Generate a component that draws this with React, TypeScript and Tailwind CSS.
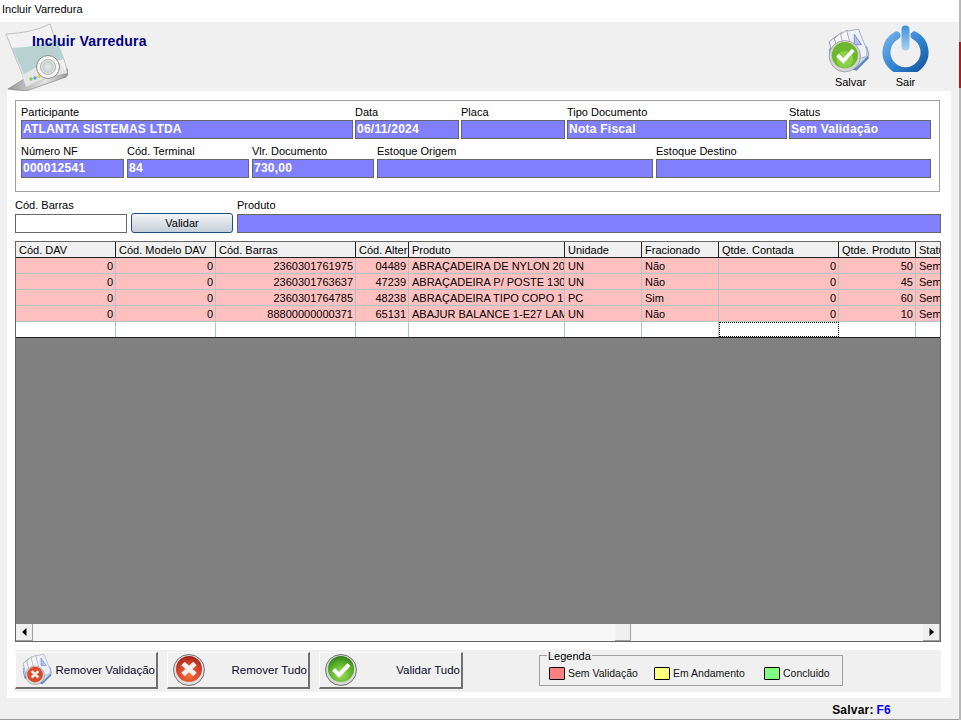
const FONT = "[font-family:'Liberation_Sans',Arial,sans-serif]";

function Field({ label, value, w }: { label: string; value?: string; w: string }) {
  return (
    <div className={`flex flex-col ${w}`}>
      <div className="h-[15px] text-[11px] leading-[15px] text-black">{label}</div>
      <div className="h-[19px] border border-[#666] bg-[#8080ff] pl-[1px] text-[12px] font-bold leading-[16px] tracking-[0.25px] text-white">
        {value}
      </div>
    </div>
  );
}

function CheckCircle({ size, cls }: { size: number; cls?: string }) {
  return (
    <svg width={size} height={size} viewBox="0 0 32 32" className={cls}>
      <defs>
        <radialGradient id="gc" cx="50%" cy="70%" r="70%">
          <stop offset="0%" stopColor="#a6e05a" />
          <stop offset="60%" stopColor="#5cb32a" />
          <stop offset="100%" stopColor="#2f7f1a" />
        </radialGradient>
      </defs>
      <circle cx="16" cy="16" r="15.5" fill="#d8d8d8" stroke="#555" strokeWidth="0.8" />
      <circle cx="16" cy="15" r="13" fill="url(#gc)" />
      <path d="M8.5 15.5 L14 21 L24 10.5" fill="none" stroke="#fff" strokeWidth="4" />
    </svg>
  );
}

function XCircle({ size, cls }: { size: number; cls?: string }) {
  return (
    <svg width={size} height={size} viewBox="0 0 32 32" className={cls}>
      <defs>
        <radialGradient id="rc" cx="50%" cy="75%" r="75%">
          <stop offset="0%" stopColor="#f2703a" />
          <stop offset="60%" stopColor="#d8432a" />
          <stop offset="100%" stopColor="#a02318" />
        </radialGradient>
      </defs>
      <circle cx="16" cy="16" r="15.5" fill="#e0e0e0" stroke="#555" strokeWidth="0.8" />
      <circle cx="16" cy="15" r="13" fill="url(#rc)" />
      <path d="M10 9.5 L22 20.5 M22 9.5 L10 20.5" fill="none" stroke="#f4f0ec" strokeWidth="5" />
    </svg>
  );
}

function Papers({ kind, w, h, cls }: { kind: "ok" | "x"; w: number; h: number; cls?: string }) {
  return (
    <svg width={w} height={h} viewBox="0 0 44 42" className={cls}>
      <path d="M4 22 L6 32 L30 40 L42 28 L40 20 Z" fill="#5d86c4" />
      <path d="M4 19 L6 29 L30 37 L42 25 L40 17 Z" fill="#cfdcf0" stroke="#6f8fc2" strokeWidth="0.8" />
      <path d="M4 12 L12 6 L18 26 L8 28 Z" fill="#eef1f6" stroke="#8a8f98" strokeWidth="0.8" />
      <path d="M9 9 L16 3 L24 24 L14 28 Z" fill="#f5f6f9" stroke="#8a8f98" strokeWidth="0.8" />
      <path d="M15 5 L21 1 L28 22 L20 26 Z" fill="#f5f6f9" stroke="#9a9fa8" strokeWidth="0.8" />
      <path d="M21 2 L32 0 L40 20 L40 26 L28 30 Z" fill="#eef1fa" stroke="#9aa4bd" strokeWidth="0.8" />
      <path d="M28 5 L35 15 L28 15 Z" fill="#b4bdf0" stroke="#6a74d0" strokeWidth="0.7" />
      {kind === "ok" ? (
        <g>
          <circle cx="19" cy="26" r="15" fill="#d4d4d4" stroke="#8a8a8a" strokeWidth="0.6" />
          <circle cx="19" cy="25" r="12.5" fill="#6db82f" />
          <circle cx="19" cy="29" r="8" fill="#8fd04a" />
          <path d="M12 25 L17.5 30.5 L27 20" fill="none" stroke="#fff" strokeWidth="3.6" />
        </g>
      ) : (
        <g>
          <circle cx="20" cy="28" r="12.5" fill="#dcdcdc" stroke="#777" strokeWidth="0.6" />
          <circle cx="20" cy="27" r="10.5" fill="#dc4a2c" />
          <path d="M15.5 22.5 L24.5 31 M24.5 22.5 L15.5 31" fill="none" stroke="#f6f0ec" strokeWidth="3.4" />
        </g>
      )}
    </svg>
  );
}

function PowerIcon() {
  return (
    <svg width="47" height="47" viewBox="0 0 47 47">
      <defs>
        <linearGradient id="pw" x1="0" y1="0" x2="1" y2="1">
          <stop offset="0%" stopColor="#6fb0e6" />
          <stop offset="55%" stopColor="#2f80d0" />
          <stop offset="100%" stopColor="#15569f" />
        </linearGradient>
        <linearGradient id="pb" x1="0" y1="0" x2="0" y2="1">
          <stop offset="0%" stopColor="#3f8fd8" />
          <stop offset="100%" stopColor="#a8d4f2" />
        </linearGradient>
      </defs>
      <path d="M14.5 10.5 A 19 19 0 1 0 32.5 10.5" fill="none" stroke="url(#pw)" strokeWidth="8" strokeLinecap="round" />
      <rect x="19.5" y="0.5" width="8" height="25" rx="4" fill="url(#pb)" />
    </svg>
  );
}

function DocIcon() {
  return (
    <svg width="64" height="68" viewBox="0 0 64 68" className="shrink-0">
      <defs>
        <linearGradient id="stand" x1="0" y1="0" x2="1" y2="0">
          <stop offset="0%" stopColor="#9a9a9a" />
          <stop offset="60%" stopColor="#e4e4e4" />
          <stop offset="100%" stopColor="#8a8a8a" />
        </linearGradient>
        <radialGradient id="lens">
          <stop offset="0%" stopColor="#e6ecec" />
          <stop offset="70%" stopColor="#c8d0d0" />
          <stop offset="100%" stopColor="#f4f4f4" />
        </radialGradient>
      </defs>
      <path d="M4 66 L20 56 L56 42 L67 48 L62 54 L22 68 Z" fill="url(#stand)" stroke="#888" strokeWidth="0.7" />
      <path d="M2 11 Q28 10 46 1 Q50 14 57 30 Q63 42 63 50 Q40 54 22 64 Q18 48 12 36 Z" fill="#f2f2f2" stroke="#b4b4b4" strokeWidth="0.8" />
      <path d="M8 25 Q30 24 53 17 Q57 26 60 36 L44 40 Q30 44 20 52 Q16 42 13 36 Z" fill="#b8d2d2" />
      <path d="M18 52 Q34 43 56 40 L63 50 Q40 54 22 64 Z" fill="#e6e6e6" />
      <circle cx="44" cy="44" r="11.5" fill="#f4f4f4" stroke="#8c8c8c" strokeWidth="1" />
      <circle cx="44" cy="44" r="7.5" fill="url(#lens)" stroke="#9a9a9a" strokeWidth="0.8" />
      <circle cx="27" cy="56" r="1.7" fill="#8cc84a" />
      <circle cx="31" cy="55" r="1.7" fill="#5aa0d8" />
      <circle cx="35" cy="53.5" r="1.7" fill="#e0d040" />
    </svg>
  );
}

const COLS = [
  "w-[100px]",
  "w-[100px]",
  "w-[140px]",
  "w-[53px]",
  "w-[156px]",
  "w-[77px]",
  "w-[77px]",
  "w-[120px]",
  "w-[77px]",
  "w-[25px]",
];
const HEAD = ["Cód. DAV", "Cód. Modelo DAV", "Cód. Barras", "Cód. Alter", "Produto", "Unidade", "Fracionado", "Qtde. Contada", "Qtde. Produto", "Status"];
const RIGHT = [true, true, true, true, false, false, false, true, true, false];
const ROWS = [
  ["0", "0", "2360301761975", "04489", "ABRAÇADEIRA DE NYLON 20", "UN", "Não", "0", "50", "Sem Validação"],
  ["0", "0", "2360301763637", "47239", "ABRAÇADEIRA P/ POSTE 130", "UN", "Não", "0", "45", "Sem Validação"],
  ["0", "0", "2360301764785", "48238", "ABRAÇADEIRA TIPO COPO 1.", "PC", "Sim", "0", "60", "Sem Validação"],
  ["0", "0", "88800000000371", "65131", "ABAJUR BALANCE 1-E27 LAM", "UN", "Não", "0", "10", "Sem Validação"],
];

function ScrollBtn({ dir }: { dir: "l" | "r" }) {
  return (
    <div className="flex w-[17px] items-center justify-center border-b border-r border-[#a0a0a0] bg-[#f0f0f0]">
      <svg width="5" height="8" viewBox="0 0 5 8">
        <path d={dir === "l" ? "M4.5 0 L0 4 L4.5 8 Z" : "M0.5 0 L5 4 L0.5 8 Z"} fill="#000" />
      </svg>
    </div>
  );
}

function DataGrid() {
  return (
    <div className="mt-[8px] flex h-[401px] w-[926px] flex-col overflow-hidden border border-[#666] bg-[#808080] text-[11px] text-black">
      <div className="flex h-[16px] shrink-0 border-b border-[#222] bg-[#f0f0f0]">
        {HEAD.map((h, i) => (
          <div key={h} className={`${COLS[i]} shrink-0 overflow-hidden whitespace-nowrap border-r border-[#222] pl-[3px] leading-[16px]`}>
            {h}
          </div>
        ))}
      </div>
      {ROWS.map((r, ri) => (
        <div key={ri} className="flex h-[16px] shrink-0 bg-[#ffc0c0]">
          {r.map((c, i) => (
            <div
              key={i}
              className={`${COLS[i]} shrink-0 overflow-hidden whitespace-nowrap border-b border-r border-[#b4c4c4] leading-[16px] ${RIGHT[i] ? "pr-[2px] text-right" : "pl-[3px] text-left"}`}
            >
              {c}
            </div>
          ))}
        </div>
      ))}
      <div className="flex h-[16px] shrink-0 border-b border-[#222] bg-white">
        {COLS.map((w, i) => (
          <div key={i} className={`${w} shrink-0 ${i === 7 ? "border border-dotted border-black" : "border-r border-[#b4c4c4]"}`} />
        ))}
      </div>
      <div className="flex-1" />
      <div className="flex h-[17px] shrink-0 items-stretch bg-[#f7f7f7]">
        <ScrollBtn dir="l" />
        <div className="flex-1 pl-[582px]">
          <div className="h-full w-[16px] border-b border-r border-[#a0a0a0] bg-[#f0f0f0]" />
        </div>
        <ScrollBtn dir="r" />
      </div>
    </div>
  );
}

function ActionButton({ w, icon, label, iconCls }: { w: string; icon: React.ReactNode; label: string; iconCls: string }) {
  return (
    <div className={`flex h-[37px] ${w} items-center justify-between border-b-2 border-r-2 border-t border-l border-b-[#707070] border-r-[#707070] border-t-[#fff] border-l-[#fff] bg-[#f0f0f0] pr-[1px] ${iconCls}`}>
      {icon}
      <span className="whitespace-nowrap pt-[1px] text-[11.5px] text-[#0a0a2a]">{label}</span>
    </div>
  );
}

function Legend({ color, label, w }: { color: string; label: string; w: string }) {
  return (
    <div className={`flex items-center gap-[3px] ${w}`}>
      <div className={`h-[13px] w-[16px] rounded-[1px] border border-black ${color}`} />
      <span className="whitespace-nowrap text-[10.5px] leading-[13px] text-[#111]">{label}</span>
    </div>
  );
}

export default function App() {
  return (
    <div className={`flex h-[720px] w-[961px] overflow-hidden bg-white ${FONT}`}>
      <div className="flex h-full w-[959px] flex-col">
        <div className="h-[22px] shrink-0 bg-white pl-[2px] text-[11px] leading-[18px] text-black">Incluir Varredura</div>
        <div className="flex flex-1 flex-col bg-[#f0f0f0]">
          <div className="flex h-[69px] shrink-0 items-start justify-between">
            <div className="flex items-start pl-[4px] pt-[1px]">
              <DocIcon />
              <div className="relative -ml-[36px] mt-[10px] text-[14px] font-bold leading-[16px] tracking-[0.2px] text-[#000080]">
                Incluir Varredura
              </div>
            </div>
            <div className="flex items-start pr-[26px] text-[11px] text-black">
              <div className="flex w-[55px] flex-col items-center pt-[7px]">
                <Papers kind="ok" w={46} h={44} cls="mr-[5px]" />
                <span className="mt-[2px] leading-[14px]">Salvar</span>
              </div>
              <div className="flex w-[55px] flex-col items-center pt-[3px]">
                <PowerIcon />
                <span className="mt-[3px] leading-[14px]">Sair</span>
              </div>
            </div>
          </div>
          <div className="ml-[7px] h-[607px] w-[944px] shrink-0 bg-white pl-[8px] pt-[9px]">
            <div className="h-[92px] w-[925px] border border-[#a0a0a0] px-[5px] pt-[4px]">
              <div className="flex gap-[2px]">
                <Field w="w-[332px]" label="Participante" value="ATLANTA SISTEMAS LTDA" />
                <Field w="w-[104px]" label="Data" value="06/11/2024" />
                <Field w="w-[104px]" label="Placa" />
                <Field w="w-[220px]" label="Tipo Documento" value="Nota Fiscal" />
                <Field w="w-[142px]" label="Status" value="Sem Validação" />
              </div>
              <div className="mt-[5px] flex gap-[3px]">
                <Field w="w-[103px]" label="Número NF" value="000012541" />
                <Field w="w-[122px]" label="Cód. Terminal" value="84" />
                <Field w="w-[122px]" label="Vlr. Documento" value="730,00" />
                <Field w="w-[276px]" label="Estoque Origem" />
                <Field w="w-[275px]" label="Estoque Destino" />
              </div>
            </div>
            <div className="mt-[6px] flex w-[926px] items-end">
              <div className="flex w-[112px] flex-col">
                <div className="h-[16px] text-[11px] leading-[14px] text-black">Cód. Barras</div>
                <div className="h-[19px] border border-[#666] bg-white" />
              </div>
              <div className="ml-[4px] flex h-[20px] w-[102px] items-center justify-center rounded-[3px] border border-[#1f4f80] bg-gradient-to-b from-[#f4f6f8] to-[#c4ced8] text-[11px] text-black">
                Validar
              </div>
              <div className="ml-[4px] flex flex-1 flex-col">
                <div className="h-[16px] text-[11px] leading-[14px] text-black">Produto</div>
                <div className="h-[19px] border border-[#666] bg-[#8080ff]" />
              </div>
            </div>
            <DataGrid />
            <div className="mt-[8px] flex h-[42px] w-[926px] items-start bg-[#f0f0f0] pt-[2px]">
              <ActionButton w="w-[143px]" iconCls="pl-[4px]" icon={<Papers kind="x" w={33} h={32} />} label="Remover Validação" />
              <div className="w-[9px]" />
              <ActionButton w="w-[143px]" iconCls="pl-[5px]" icon={<XCircle size={32} />} label="Remover Tudo" />
              <div className="w-[9px]" />
              <ActionButton w="w-[144px]" iconCls="pl-[5px]" icon={<CheckCircle size={32} />} label="Validar Tudo" />
              <div className="relative ml-[76px] mt-[3px] flex h-[31px] w-[304px] items-center border border-[#a0a0a0] pl-[9px] pt-[6px]">
                <span className="absolute -top-[7px] left-[7px] bg-[#f0f0f0] px-[1px] text-[11px] leading-[14px] text-black">Legenda</span>
                <Legend w="w-[105px]" color="bg-[#ff8080]" label="Sem Validação" />
                <Legend w="w-[110px]" color="bg-[#ffff80]" label="Em Andamento" />
                <Legend w="w-[70px]" color="bg-[#80ff80]" label="Concluido" />
              </div>
            </div>
          </div>
          <div className="flex flex-1 items-center justify-end pr-[68px] pt-[2px] text-[12px] font-bold tracking-[0.2px]">
            <span className="text-black">Salvar:</span>
            <span className="ml-[3px] text-[#0000ff]">F6</span>
          </div>
          <div className="h-[1px] shrink-0 bg-[#999]" />
        </div>
      </div>
      <div className="flex h-full w-[2px] flex-col bg-[#b8b8b8]">
        <div className="h-[42px] shrink-0" />
        <div className="h-[46px] shrink-0 bg-[#b01818]" />
      </div>
    </div>
  );
}
